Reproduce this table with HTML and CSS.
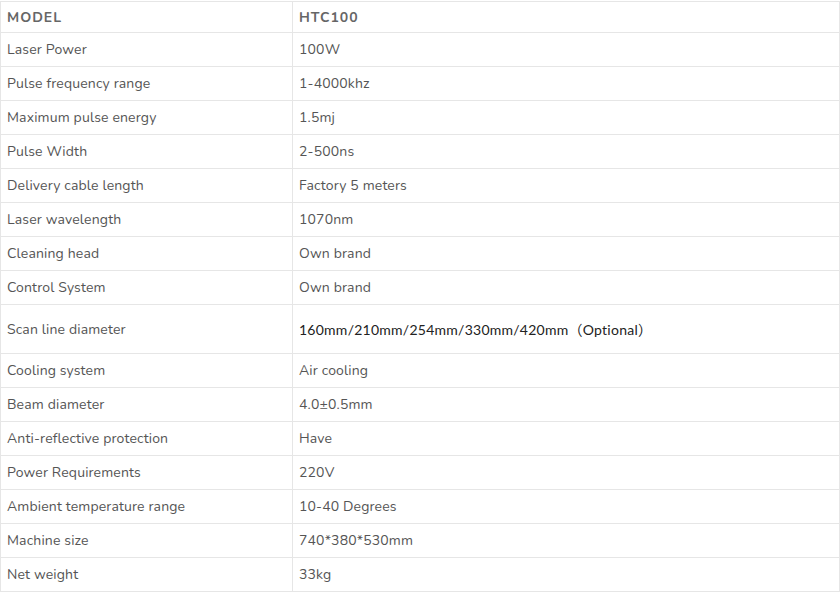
FILE: index.html
```html
<!DOCTYPE html>
<html>
<head>
<meta charset="utf-8">
<link rel="stylesheet" href="styles.css">
</head>
<body>
<table class="spec">
  <colgroup><col class="c1"><col class="c2"></colgroup>
  <tr class="head"><th>MODEL</th><th>HTC100</th></tr>
  <tr><td>Laser Power</td><td>100W</td></tr>
  <tr><td>Pulse frequency range</td><td>1-4000khz</td></tr>
  <tr><td>Maximum pulse energy</td><td>1.5mj</td></tr>
  <tr><td>Pulse Width</td><td>2-500ns</td></tr>
  <tr><td>Delivery cable length</td><td>Factory 5 meters</td></tr>
  <tr><td>Laser wavelength</td><td>1070nm</td></tr>
  <tr><td>Cleaning head</td><td>Own brand</td></tr>
  <tr><td>Control System</td><td>Own brand</td></tr>
  <tr class="tall"><td>Scan line diameter</td><td class="dark">160mm/210mm/254mm/330mm/420mm（Optional）</td></tr>
  <tr><td>Cooling system</td><td>Air cooling</td></tr>
  <tr><td>Beam diameter</td><td>4.0±0.5mm</td></tr>
  <tr><td>Anti-reflective protection</td><td>Have</td></tr>
  <tr><td>Power Requirements</td><td>220V</td></tr>
  <tr><td>Ambient temperature range</td><td>10-40 Degrees</td></tr>
  <tr><td>Machine size</td><td>740*380*530mm</td></tr>
  <tr><td>Net weight</td><td>33kg</td></tr>
</table>
</body>
</html>
```
FILE: styles.css
```css
html, body { margin: 0; padding: 0; background: #fff; }
body { font-family: "Nunito", "Lato", "Open Sans", sans-serif; }
.spec {
  border-collapse: collapse;
  width: 840px;
  margin-top: 1px;
  table-layout: fixed;
}
.c1 { width: 292px; }
.spec th, .spec td {
  border: 1px solid #e6e6e6;
  padding: 0 6px;
  height: 34px;
  box-sizing: border-box;
  text-align: left;
  vertical-align: middle;
  font-size: 14px;
  letter-spacing: 0.15px;
  color: #555;
  font-weight: 400;
}
.spec .head th {
  height: 31px;
  font-weight: 700;
  letter-spacing: 1px;
  color: #666;
  font-size: 14px;
}
.spec .tall td { height: 49px; }
.spec td.dark { color: #222; letter-spacing: 0.25px; font-family: "Lato", "Noto Sans CJK SC", sans-serif; }
```
